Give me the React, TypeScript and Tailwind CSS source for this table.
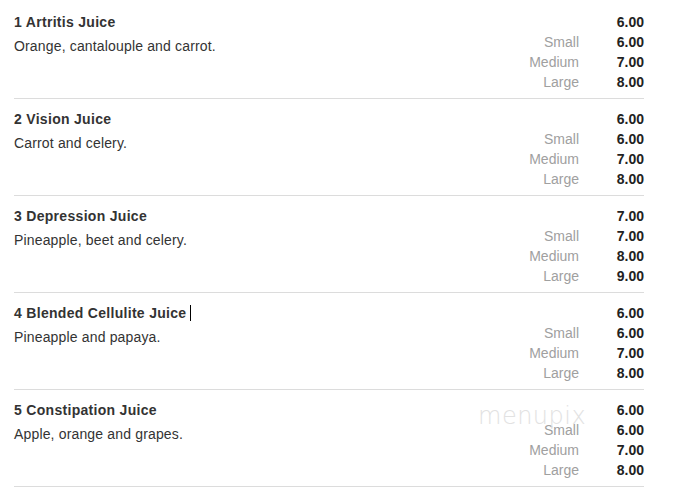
import React from 'react';

interface Juice {
  name: string;
  desc: string;
  base: string;
  prices: [string, string, string];
  cursor?: boolean;
}

const juices: Juice[] = [
  { name: '1 Artritis Juice', desc: 'Orange, cantalouple and carrot.', base: '6.00', prices: ['6.00', '7.00', '8.00'] },
  { name: '2 Vision Juice', desc: 'Carrot and celery.', base: '6.00', prices: ['6.00', '7.00', '8.00'] },
  { name: '3 Depression Juice', desc: 'Pineapple, beet and celery.', base: '7.00', prices: ['7.00', '8.00', '9.00'] },
  { name: '4 Blended Cellulite Juice', desc: 'Pineapple and papaya.', base: '6.00', prices: ['6.00', '7.00', '8.00'], cursor: true },
  { name: '5 Constipation Juice', desc: 'Apple, orange and grapes.', base: '6.00', prices: ['6.00', '7.00', '8.00'] },
];

const sizes = ['Small', 'Medium', 'Large'];

const JuiceRow: React.FC<{ item: Juice }> = ({ item }) => {
  return (
    <div className="flex justify-between border-b border-[#dcdcdc] pt-[10px] pb-[6px]">
      <div>
        <div className="flex items-center h-5 font-bold text-[#333] leading-5 tracking-[0.3px]">
          {item.name}
          {item.cursor && <span className="ml-[4px] inline-block w-px h-[16px] bg-black" />}
        </div>
        <div className="mt-1 leading-5 text-[#333] tracking-[0.16px]">{item.desc}</div>
      </div>
      <div className="grid grid-cols-[auto_65px] leading-5">
        <div />
        <div className="text-right font-bold text-[#222]">{item.base}</div>
        {sizes.map((s, i) => (
          <React.Fragment key={s}>
            <div className="text-right text-[#a0a0a0]">{s}</div>
            <div className="text-right font-bold text-[#222]">{item.prices[i]}</div>
          </React.Fragment>
        ))}
      </div>
    </div>
  );
};

export default function App() {
  return (
    <div className="relative w-[693px] h-[488px] bg-white overflow-hidden font-['Liberation_Sans',Arial,sans-serif] text-[14px]">
      <div className="ml-[14px] w-[630px] pt-[2px]">
        {juices.map((j) => (
          <JuiceRow key={j.name} item={j} />
        ))}
      </div>
      <div className="absolute left-[478px] top-[404px] text-[24px] leading-none tracking-[0.5px] text-[#e2e2e2] font-['DejaVu_Sans',sans-serif] font-extralight select-none pointer-events-none">
        menupix
      </div>
    </div>
  );
}
